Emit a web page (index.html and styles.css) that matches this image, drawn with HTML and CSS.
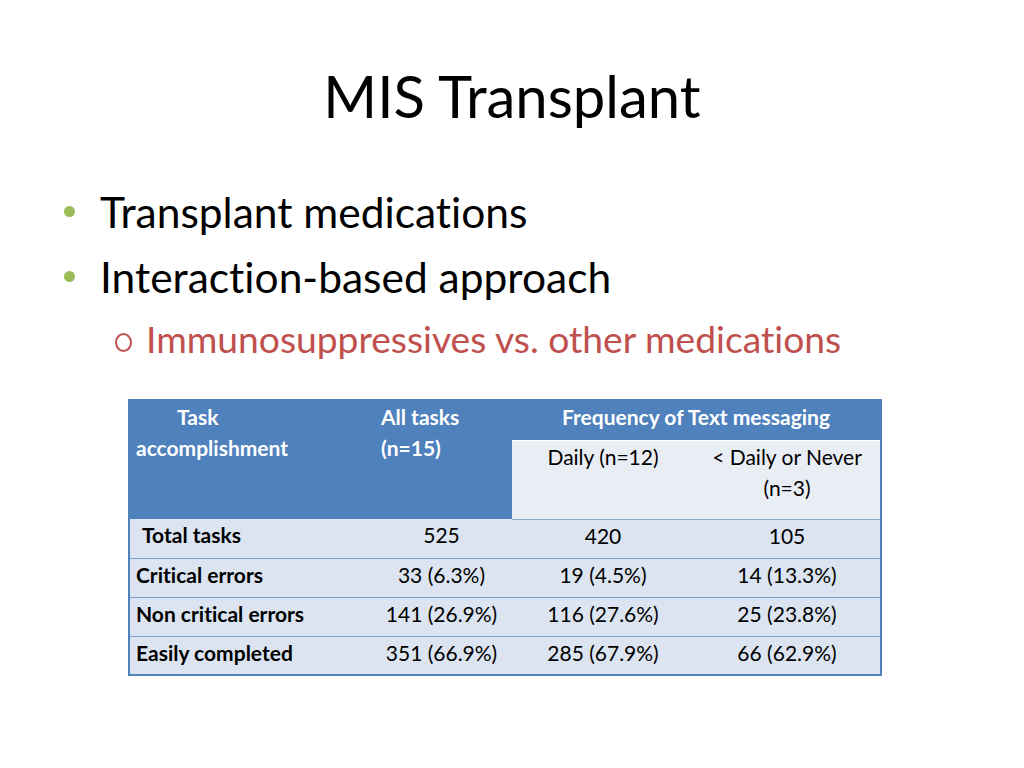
FILE: index.html
```html
<!DOCTYPE html>
<html>
<head>
<meta charset="utf-8">
<link rel="stylesheet" href="styles.css">
</head>
<body>
<div class="slide">
  <h1 class="title">MIS Transplant</h1>
  <ul class="bullets">
    <li class="b1"><span class="dot"></span><span>Transplant medications</span></li>
    <li class="b1"><span class="dot"></span><span>Interaction-based approach</span></li>
    <li class="b2"><span class="ring"></span><span>Immunosuppressives vs. other medications</span></li>
  </ul>
  <table class="data">
    <colgroup>
      <col class="c1"><col class="c2"><col class="c3"><col class="c4">
    </colgroup>
    <tr class="h-top">
      <th rowspan="2" class="h-first"><span class="indent">Task</span><br>accomplishment</th>
      <th rowspan="2" class="h-left">All tasks<br>(n=15)</th>
      <th colspan="2" class="h-span">Frequency of Text messaging</th>
    </tr>
    <tr class="h-sub">
      <td>Daily (n=12)</td>
      <td>&lt; Daily or Never<br>(n=3)</td>
    </tr>
    <tr class="row">
      <td class="lbl lbl-indent">Total tasks</td><td>525</td><td>420</td><td>105</td>
    </tr>
    <tr class="row">
      <td class="lbl">Critical errors</td><td>33 (6.3%)</td><td>19 (4.5%)</td><td>14 (13.3%)</td>
    </tr>
    <tr class="row">
      <td class="lbl">Non critical errors</td><td>141 (26.9%)</td><td>116 (27.6%)</td><td>25 (23.8%)</td>
    </tr>
    <tr class="row">
      <td class="lbl">Easily completed</td><td>351 (66.9%)</td><td>285 (67.9%)</td><td>66 (62.9%)</td>
    </tr>
  </table>
</div>
</body>
</html>
```
FILE: styles.css
```css
* { box-sizing: border-box; }
html, body { margin: 0; padding: 0; background: #fff; }
.slide {
  width: 1024px;
  height: 768px;
  font-family: Lato, "Liberation Sans", sans-serif;
  font-variant-ligatures: none;
  color: #000;
  display: flex;
  flex-direction: column;
  overflow: hidden;
}
.title {
  margin: 67px 0 0 0;
  font-size: 58px;
  line-height: 58px;
  font-weight: 400;
  text-align: center;
}
.bullets {
  list-style: none;
  margin: 54px 0 0 0;
  padding: 0;
}
.b1 {
  display: flex;
  align-items: center;
  font-size: 42.5px;
  line-height: 65px;
  height: 65px;
  padding-left: 64px;
}
.b1 .dot {
  width: 11px;
  height: 11px;
  border-radius: 50%;
  background: #9bbb59;
  margin-right: 25px;
  flex: none;
}
.b2 {
  display: flex;
  align-items: center;
  font-size: 37.2px;
  line-height: 59px;
  height: 59px;
  padding-left: 115px;
  color: #c0504d;
}
.b2 .ring {
  width: 17px;
  height: 19px;
  border: 2px solid #c0504d;
  border-radius: 50%;
  margin: 8px 14px 0 0;
  flex: none;
}
.data {
  margin: 31px 0 0 128px;
  width: 752px;
  border-collapse: collapse;
  table-layout: fixed;
  font-size: 21px;
  line-height: 31px;
  border: 2px solid #4f81bd;
}
.c1 { width: 242px; }
.c2 { width: 141px; }
.c3 { width: 182px; }
.c4 { width: 187px; }
.data th {
  background: #4f81bd;
  color: #fff;
  font-weight: 700;
  vertical-align: top;
  padding: 0 6px;
}
.h-first, .h-left { text-align: left; }
.h-left { padding-left: 10px !important; }
.indent { padding-left: 41px; }
.h-top th { height: 40px; }
.h-span { text-align: center; border-bottom: 1px solid #fff; }
.h-sub td {
  background: #e9edf4;
  text-align: center;
  vertical-align: top;
  height: 79px;
  padding: 0 6px;
  border-bottom: 1px solid #8ea9cf;
}
.row td {
  background: #dbe4f0;
  text-align: center;
  height: 39px;
  padding: 0 6px;
  vertical-align: top;
  border-bottom: 1px solid #7f9fcd;
}
.row td.lbl {
  text-align: left;
  font-weight: 700;
}
.row td.lbl-indent { padding-left: 12px; }
```
